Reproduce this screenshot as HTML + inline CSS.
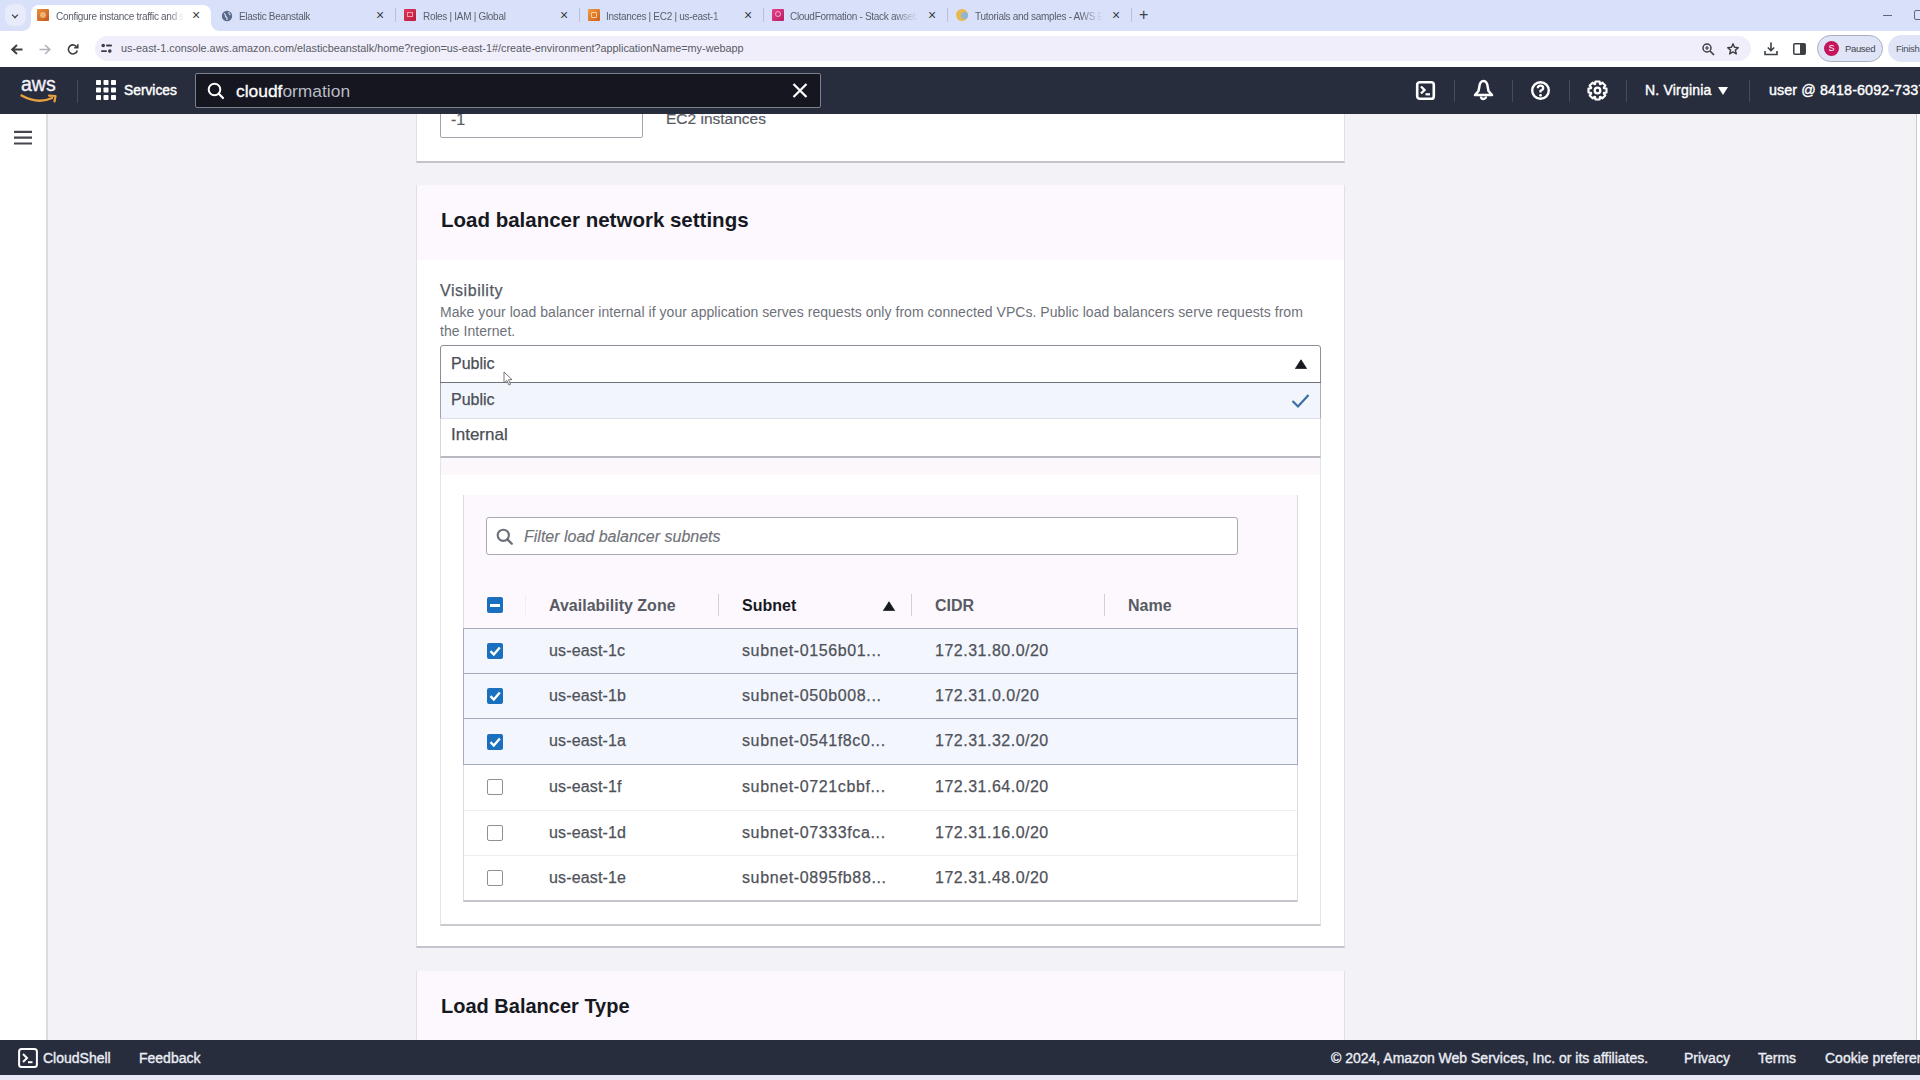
<!DOCTYPE html>
<html><head><meta charset="utf-8">
<style>
*{box-sizing:border-box;margin:0;padding:0}
html,body{width:1920px;height:1080px;overflow:hidden;background:#f3f2f7;font-family:"Liberation Sans",sans-serif;color:#16191f}
.a{position:absolute}
#tabs{z-index:10;left:0;top:0;width:1920px;height:31px;background:#d9e0fa}
#addr{z-index:10;left:0;top:31px;width:1920px;height:36px;background:#fff}
#nav{z-index:10;left:0;top:67px;width:1920px;height:47px;background:#282d3e}
#side{z-index:5;left:0;top:114px;width:48px;height:926px;background:#fff;border-right:2px solid #dcdce0}
#foot{z-index:10;left:0;top:1040px;width:1920px;height:35px;background:#282d3e}
#task{z-index:10;left:0;top:1075px;width:1920px;height:5px;background:#e6e8f6}
.tab{position:absolute;top:10px;height:14px;font-size:10px;line-height:13px;color:#5a5e69;white-space:nowrap;overflow:hidden;letter-spacing:-.3px;-webkit-mask-image:linear-gradient(to right,#000 82%,transparent)}
.tx{position:absolute;top:7px;font-size:14px;line-height:16px;color:#3c4043}
.card{position:absolute;background:#fff;box-shadow:0 1px 1px 0 rgba(0,28,36,.3),1px 1px 1px 0 rgba(0,28,36,.15),-1px 1px 1px 0 rgba(0,28,36,.15)}
.hd{top:596px;font-size:16px;font-weight:bold;color:#585b63;line-height:20px;white-space:nowrap}
.td{font-size:16px;color:#4f525a;-webkit-text-stroke:.25px #4f525a;line-height:20px;white-space:nowrap}
</style></head><body>
<div id="tabs" class="a">
  <div class="a" style="left:5px;top:4px;width:21px;height:22px;border-radius:8px;background:#e7ebfa"></div>
  <div class="a" style="left:11px;top:11px;width:8px;height:8px;border-right:2px solid #444;border-bottom:2px solid #444;transform:rotate(45deg) scale(.6)"></div>
  <div class="a" style="left:31px;top:5px;width:180px;height:26px;background:#fff;border-radius:8px 8px 0 0"></div><div class="a" style="left:23px;top:23px;width:8px;height:8px;background:radial-gradient(circle at 0 0,transparent 7.5px,#fff 8px)"></div><div class="a" style="left:211px;top:23px;width:8px;height:8px;background:radial-gradient(circle at 100% 0,transparent 7.5px,#fff 8px)"></div>
  <div class="a" style="left:37px;top:9px;width:12px;height:12px;background:linear-gradient(135deg,#e9913a,#c4561f);border-radius:1px"></div><div class="a" style="left:40px;top:12px;width:6px;height:6px;border-radius:50%;background:#f6c08a;opacity:.8"></div>
  <div class="tab" style="left:56px;width:128px;-webkit-mask-image:linear-gradient(to right,#000 88%,transparent)">Configure instance traffic and s</div>
  <div class="tx" style="left:192px">&#215;</div>
  <svg class="a" style="left:221px;top:10px" width="12" height="12" viewBox="0 0 12 12"><circle cx="6" cy="6" r="5.2" fill="#5b6b8c"/><path d="M3 3.5 Q5 4.5 4.5 6.5 Q6.5 7 6 10 M8 2 Q7.5 4 9.5 5" stroke="#dfe4f7" stroke-width="1.1" fill="none"/></svg>
  <div class="tab" style="left:239px;width:130px">Elastic Beanstalk</div>
  <div class="tx" style="left:376px">&#215;</div>
  <div class="a" style="left:395px;top:8px;width:1px;height:14px;background:#b8bfd8"></div>
  <div class="a" style="left:404px;top:9px;width:12px;height:12px;background:linear-gradient(135deg,#e0365a,#b81d3e);border-radius:1px"></div><div class="a" style="left:407px;top:12px;width:6px;height:5px;border:1px solid #f3a0b0"></div>
  <div class="tab" style="left:423px;width:130px">Roles | IAM | Global</div>
  <div class="tx" style="left:560px">&#215;</div>
  <div class="a" style="left:579px;top:8px;width:1px;height:14px;background:#b8bfd8"></div>
  <div class="a" style="left:588px;top:9px;width:12px;height:12px;background:linear-gradient(135deg,#f09a3a,#d0601f);border-radius:1px"></div><div class="a" style="left:591px;top:12px;width:6px;height:6px;border:1px solid #fad0a0;border-radius:1px"></div>
  <div class="tab" style="left:606px;width:130px">Instances | EC2 | us-east-1</div>
  <div class="tx" style="left:744px">&#215;</div>
  <div class="a" style="left:763px;top:8px;width:1px;height:14px;background:#b8bfd8"></div>
  <div class="a" style="left:772px;top:9px;width:12px;height:12px;background:linear-gradient(135deg,#e8408a,#b81e63);border-radius:1px"></div><div class="a" style="left:775px;top:11px;width:6px;height:6px;border:1px solid #f7b0d0;border-radius:50%"></div>
  <div class="tab" style="left:790px;width:128px">CloudFormation - Stack awseb</div>
  <div class="tx" style="left:928px">&#215;</div>
  <div class="a" style="left:947px;top:8px;width:1px;height:14px;background:#b8bfd8"></div>
  <div class="a" style="left:956px;top:9px;width:12px;height:12px;background:#e6b94a;border-radius:50%"></div><div class="a" style="left:961px;top:12px;width:7px;height:7px;background:#8fb5d8;border-radius:50%"></div>
  <div class="tab" style="left:975px;width:128px">Tutorials and samples - AWS El</div>
  <div class="tx" style="left:1112px">&#215;</div>
  <div class="a" style="left:1131px;top:8px;width:1px;height:14px;background:#b8bfd8"></div>
  <div class="tx" style="left:1139px;top:7px;font-size:16px">+</div>
  <div class="a" style="left:1883px;top:15px;width:9px;height:1.3px;background:#626678"></div><div class="a" style="left:1914px;top:10px;width:10px;height:10px;border:1.3px solid #626678;border-radius:2px"></div>
</div>
<div id="addr" class="a">
  <svg class="a" style="left:11px;top:13px" width="12" height="11" viewBox="0 0 12 11"><path d="M11.5 5.5 H1.5 M6 1 L1.2 5.5 L6 10" stroke="#3c4043" stroke-width="1.9" fill="none"/></svg>
  <svg class="a" style="left:39px;top:13px" width="12" height="11" viewBox="0 0 12 11"><path d="M0.5 5.5 H10.5 M6 1 L10.8 5.5 L6 10" stroke="#b0b3ba" stroke-width="1.6" fill="none"/></svg>
  <svg class="a" style="left:67px;top:12px" width="12" height="12" viewBox="0 0 12 12"><path d="M10 4.5 A4.5 4.5 0 1 0 10.3 7.5" stroke="#3c4043" stroke-width="1.6" fill="none"/><path d="M7.2 4.8 H10.8 V1.2" stroke="#3c4043" stroke-width="1.6" fill="none"/></svg>
  <div class="a" style="left:95px;top:5px;width:1656px;height:25px;border-radius:13px;background:#f0eefa"></div>
  <svg class="a" style="left:101px;top:12px" width="11" height="11" viewBox="0 0 11 11" fill="#3c4043"><circle cx="2.2" cy="2.5" r="1.8"/><rect x="5" y="1.6" width="6" height="1.8" rx=".9"/><rect x="0" y="7.2" width="6" height="1.8" rx=".9"/><circle cx="8.8" cy="8.1" r="1.8"/></svg>
  <div class="a" style="left:121px;top:11px;font-size:10.85px;color:#585b64;white-space:nowrap;line-height:13px">us-east-1.console.aws.amazon.com/elasticbeanstalk/home?region=us-east-1#/create-environment?applicationName=my-webapp</div>
  <svg class="a" style="left:1702px;top:12px" width="13" height="13" viewBox="0 0 13 13"><circle cx="5" cy="5" r="4" stroke="#3c4043" stroke-width="1.5" fill="none"/><path d="M8 8 L12 12" stroke="#3c4043" stroke-width="1.7"/><path d="M5 3 V7 M3 5 H7" stroke="#3c4043" stroke-width="1.2"/></svg>
  <svg class="a" style="left:1727px;top:12px" width="12" height="12" viewBox="0 0 12 12"><path d="M6 0.8 L7.5 4.3 L11.3 4.6 L8.4 7.1 L9.3 10.9 L6 8.9 L2.7 10.9 L3.6 7.1 L0.7 4.6 L4.5 4.3 Z" stroke="#3c4043" stroke-width="1.4" fill="none" stroke-linejoin="round"/></svg>
  <svg class="a" style="left:1764px;top:11px" width="14" height="14" viewBox="0 0 14 14"><path d="M7 0.5 V8.5 M3.8 5.5 L7 8.7 L10.2 5.5" stroke="#3c4043" stroke-width="1.6" fill="none"/><path d="M1 9 V12.5 H13 V9" stroke="#3c4043" stroke-width="1.6" fill="none"/></svg>
  <svg class="a" style="left:1793px;top:12px" width="13" height="12" viewBox="0 0 13 12"><rect x="0.8" y="0.8" width="11.4" height="10.4" rx="1" stroke="#3c4043" stroke-width="1.5" fill="none"/><rect x="7" y="1" width="5" height="10" fill="#3c4043"/></svg>
  <div class="a" style="left:1817px;top:4px;width:66px;height:27px;border-radius:14px;background:#dfe4f7;border:1px solid #a9adbf"></div>
  <div class="a" style="left:1824px;top:10px;width:15px;height:15px;border-radius:50%;background:#c4145c;color:#fff;font-size:9px;text-align:center;line-height:15px">S</div>
  <div class="a" style="left:1845px;top:12px;font-size:9.5px;color:#40444e;line-height:11px;letter-spacing:-.35px">Paused</div>
  <div class="a" style="left:1888px;top:4px;width:50px;height:27px;border-radius:14px;background:#dfe4f7"></div>
  <div class="a" style="left:1896px;top:12px;font-size:9.5px;color:#4a4e5a;line-height:11px;letter-spacing:-.3px">Finish</div>
</div>
<div id="nav" class="a">
  <div class="a" style="left:21px;top:7px;font-size:19.5px;color:#f4f2fb;line-height:20px;-webkit-text-stroke:.35px #f4f2fb">aws</div>
  <svg class="a" style="left:19px;top:25px" width="40" height="12" viewBox="0 0 40 12"><path d="M2.5 3.5 Q19 12.5 33 6" stroke="#e8a040" stroke-width="2.4" fill="none" stroke-linecap="round"/><path d="M30 3.6 L36.5 4 L35.5 9.5" stroke="#e8a040" stroke-width="2.2" fill="none" stroke-linecap="round" stroke-linejoin="round"/></svg>
  <div class="a" style="left:77px;top:13px;width:1px;height:23px;background:#414d5c"></div>
  <svg class="a" style="left:96px;top:13px" width="20" height="20" viewBox="0 0 20 20" fill="#fff"><rect x="0" y="0" width="5" height="5" rx=".8"/><rect x="7.5" y="0" width="5" height="5" rx=".8"/><rect x="15" y="0" width="5" height="5" rx=".8"/><rect x="0" y="7.5" width="5" height="5" rx=".8"/><rect x="7.5" y="7.5" width="5" height="5" rx=".8"/><rect x="15" y="7.5" width="5" height="5" rx=".8"/><rect x="0" y="15" width="5" height="5" rx=".8"/><rect x="7.5" y="15" width="5" height="5" rx=".8"/><rect x="15" y="15" width="5" height="5" rx=".8"/></svg>
  <div class="a" style="left:124px;top:15px;font-size:13.8px;line-height:18px;color:#fff;-webkit-text-stroke:.45px #fff">Services</div>
  <div class="a" style="left:195px;top:6px;width:626px;height:35px;background:#15161f;border:1px solid #7a808c;border-radius:2px"></div>
  <svg class="a" style="left:207px;top:15px" width="18" height="18" viewBox="0 0 18 18"><circle cx="7.5" cy="7.5" r="5.8" stroke="#fff" stroke-width="2" fill="none"/><path d="M11.8 11.8 L16 16" stroke="#fff" stroke-width="2.2" stroke-linecap="round"/></svg>
  <div class="a" style="left:236px;top:14px;font-size:17.4px;line-height:20px;color:#fff;-webkit-text-stroke:.3px #fff">cloudf<span style="color:#b9bcc6;-webkit-text-stroke:0">ormation</span></div>
  <svg class="a" style="left:792px;top:16px" width="16" height="15" viewBox="0 0 16 15"><path d="M1.5 1 L14.5 14 M14.5 1 L1.5 14" stroke="#fff" stroke-width="2.2"/></svg>
  <svg class="a" style="left:1415px;top:13px" width="21" height="21" viewBox="0 0 21 21"><rect x="2.2" y="2.2" width="16.6" height="16.6" rx="2.6" stroke="#fff" stroke-width="2.6" fill="none"/><path d="M6 6.5 L9.5 10 L6 13.5" stroke="#fff" stroke-width="2.4" fill="none"/><path d="M10.5 14.3 H15" stroke="#fff" stroke-width="2.2"/></svg>
  <div class="a" style="left:1454px;top:13px;width:1px;height:22px;background:#414d5c"></div>
  <svg class="a" style="left:1473px;top:12px" width="21" height="22" viewBox="0 0 21 22"><path d="M10.5 2 C7.5 2 6.5 5.5 6.2 8.5 L5.5 12 L2 16 H19 L15.5 12 L14.8 8.5 C14.5 5.5 13.5 2 10.5 2 Z" stroke="#fff" stroke-width="2.5" fill="none" stroke-linejoin="round"/><path d="M8 17.5 A2.5 2.5 0 0 0 13 17.5" stroke="#fff" stroke-width="2.4" fill="none"/></svg>
  <div class="a" style="left:1512px;top:13px;width:1px;height:22px;background:#414d5c"></div>
  <svg class="a" style="left:1530px;top:13px" width="21" height="21" viewBox="0 0 21 21"><circle cx="10.5" cy="10.5" r="8.3" stroke="#fff" stroke-width="2.4" fill="none"/><path d="M7.8 8.2 Q7.8 5.6 10.5 5.6 Q13.2 5.6 13.2 8 Q13.2 9.7 10.5 10.8 L10.5 12.5" stroke="#fff" stroke-width="2.3" fill="none"/><circle cx="10.5" cy="15.3" r="1.4" fill="#fff"/></svg>
  <div class="a" style="left:1569px;top:13px;width:1px;height:22px;background:#414d5c"></div>
  <svg class="a" style="left:1587px;top:13px" width="21" height="21" viewBox="0 0 21 21"><path d="M19.48 8.49 L19.48 12.51 L16.96 12.93 L16.79 13.35 L18.27 15.43 L15.43 18.27 L13.35 16.79 L12.93 16.96 L12.51 19.48 L8.49 19.48 L8.07 16.96 L7.65 16.79 L5.57 18.27 L2.73 15.43 L4.21 13.35 L4.04 12.93 L1.52 12.51 L1.52 8.49 L4.04 8.07 L4.21 7.65 L2.73 5.57 L5.57 2.73 L7.65 4.21 L8.07 4.04 L8.49 1.52 L12.51 1.52 L12.93 4.04 L13.35 4.21 L15.43 2.73 L18.27 5.57 L16.79 7.65 L16.96 8.07 Z" stroke="#fff" stroke-width="2.2" fill="none" stroke-linejoin="round"/><circle cx="10.5" cy="10.5" r="2.8" stroke="#fff" stroke-width="2.3" fill="none"/></svg>
  <div class="a" style="left:1626px;top:13px;width:1px;height:22px;background:#414d5c"></div>
  <div class="a" style="left:1645px;top:15px;font-size:14px;line-height:17px;color:#fff;-webkit-text-stroke:.4px #fff;letter-spacing:.2px">N. Virginia</div>
  <svg class="a" style="left:1718px;top:20px" width="10" height="8" viewBox="0 0 10 8"><path d="M0 0 H10 L5 8 Z" fill="#fff"/></svg>
  <div class="a" style="left:1749px;top:13px;width:1px;height:22px;background:#414d5c"></div>
  <div class="a" style="left:1769px;top:15px;font-size:14.3px;line-height:17px;color:#fff;-webkit-text-stroke:.4px #fff;white-space:nowrap;letter-spacing:.1px">user @ 8418-6092-7337</div>
</div>
<div id="side" class="a">
  <svg class="a" style="left:14px;top:16px" width="18" height="15" viewBox="0 0 18 14"><path d="M0 1.4 H18 M0 7.2 H18 M0 13 H18" stroke="#46474e" stroke-width="2.2"/></svg>
</div>
<div id="foot" class="a">
  <svg class="a" style="left:18px;top:8px" width="20" height="20" viewBox="0 0 20 20"><rect x="1.1" y="1.1" width="17.8" height="17.8" rx="2.5" stroke="#fff" stroke-width="2" fill="none"/><path d="M5 6 L9 10 L5 14" stroke="#fff" stroke-width="2" fill="none"/><path d="M10 14.2 H14.5" stroke="#fff" stroke-width="2"/></svg>
  <div class="a" style="left:43px;top:10px;font-size:14px;line-height:17px;color:#eceef5;-webkit-text-stroke:.35px #eceef5">CloudShell</div>
  <div class="a" style="left:139px;top:10px;font-size:14px;line-height:17px;color:#eceef5;-webkit-text-stroke:.35px #eceef5">Feedback</div>
  <div class="a" style="left:1331px;top:10px;font-size:14px;line-height:17px;color:#eceef5;-webkit-text-stroke:.35px #eceef5;white-space:nowrap">&#169; 2024, Amazon Web Services, Inc. or its affiliates.</div>
  <div class="a" style="left:1684px;top:10px;font-size:14px;line-height:17px;color:#eceef5;-webkit-text-stroke:.35px #eceef5">Privacy</div>
  <div class="a" style="left:1758px;top:10px;font-size:14px;line-height:17px;color:#eceef5;-webkit-text-stroke:.35px #eceef5">Terms</div>
  <div class="a" style="left:1825px;top:10px;font-size:14px;line-height:17px;color:#eceef5;-webkit-text-stroke:.35px #eceef5;white-space:nowrap">Cookie preferences</div>
</div>
<div id="task" class="a"></div>
<div id="main" class="a" style="left:47px;top:114px;width:1869px;height:926px;background:#f3f2f7;overflow:hidden">
</div>
<div class="a" style="left:1916px;top:114px;width:1px;height:926px;background:#c9c9d0"></div>
<div class="a" style="left:1917px;top:114px;width:3px;height:926px;background:#fff"></div>
<!-- card1 -->
<div class="a" style="left:416px;top:60px;width:929px;height:103px;background:#fff;border-left:1px solid #e0e0e6;border-right:1px solid #e0e0e6;border-bottom:2px solid #c4c4cc"></div>
<div class="a" style="left:440px;top:90px;width:203px;height:48px;border:1px solid #a3a5ad;border-radius:2px;background:#fff"></div>
<div class="a" style="left:451px;top:110px;font-size:16px;color:#5a5d66;line-height:20px;-webkit-text-stroke:.2px #5a5d66">-1</div>
<div class="a" style="left:666px;top:108.5px;font-size:15.5px;color:#595c64;-webkit-text-stroke:.2px #595c64;line-height:20px">EC2 instances</div>
<!-- card2 -->
<div class="a" style="left:416px;top:185px;width:929px;height:763px;background:#fff;border-left:1px solid #e0e0e6;border-right:1px solid #e0e0e6;border-bottom:2px solid #c4c4cc"></div>
<div class="a" style="left:417px;top:185px;width:927px;height:75px;background:#fcf8fd"></div>
<div class="a" style="left:441px;top:208px;font-size:20.5px;font-weight:bold;color:#16191f;line-height:24px;white-space:nowrap">Load balancer network settings</div>
<div class="a" style="left:440px;top:281px;font-size:16px;color:#545862;-webkit-text-stroke:.25px #545862;line-height:20px;letter-spacing:.55px">Visibility</div>
<div class="a" style="left:440px;top:303.3px;width:880px;font-size:14px;color:#6e7179;line-height:19px;letter-spacing:.045px">Make your load balancer internal if your application serves requests only from connected VPCs. Public load balancers serve requests from the Internet.</div>
<!-- subnet container -->
<div class="a" style="left:440px;top:440px;width:881px;height:486px;background:#fff;border-left:1px solid #e3e3ea;border-right:1px solid #e3e3ea;border-bottom:2px solid #c9c9d0"></div>
<div class="a" style="left:441px;top:440px;width:879px;height:35px;background:#fbf7fb"></div>
<div class="a" style="left:463px;top:495px;width:835px;height:407px;background:#fff;border-left:1px solid #dcdce3;border-right:1px solid #dcdce3;border-bottom:2px solid #c4c4cc"></div>
<div class="a" style="left:464px;top:495px;width:833px;height:133px;background:#fcf8fd"></div>
<div class="a" style="left:486px;top:517px;width:752px;height:38px;background:#fff;border:1px solid #a9a9b1;border-radius:3px"></div>
<svg class="a" style="left:496px;top:528px" width="18" height="18" viewBox="0 0 18 18"><circle cx="7.3" cy="7.3" r="5.6" stroke="#6b6f78" stroke-width="2.1" fill="none"/><path d="M11.4 11.4 L15.8 15.8" stroke="#6b6f78" stroke-width="2.3" stroke-linecap="round"/></svg>
<div class="a" style="left:524px;top:526.5px;font-size:16px;font-style:italic;color:#707379;-webkit-text-stroke:.15px #707379;line-height:20px">Filter load balancer subnets</div>
<!-- header row -->
<div class="a" style="left:487px;top:597px;width:16px;height:16px;background:#1a6fbf;border-radius:2px"></div>
<div class="a" style="left:490px;top:603.5px;width:10px;height:3px;background:#fff"></div>
<div class="a" style="left:525px;top:595px;width:1px;height:21px;background:#efeef3"></div>
<div class="a" style="left:718px;top:594px;width:1px;height:22px;background:#d2d0d6"></div>
<div class="a" style="left:911px;top:594px;width:1px;height:22px;background:#d2d0d6"></div>
<div class="a" style="left:1104px;top:594px;width:1px;height:22px;background:#d2d0d6"></div>
<div class="a hd" style="left:549px">Availability Zone</div>
<div class="a hd" style="left:742px;color:#16191f">Subnet</div>
<svg class="a" style="left:883px;top:600.5px" width="12" height="10" viewBox="0 0 12 10"><path d="M6 0.8 L11.6 9.6 H0.4 Z" fill="#16191f" stroke="#16191f" stroke-width=".8" stroke-linejoin="round"/></svg>
<div class="a hd" style="left:935px">CIDR</div>
<div class="a hd" style="left:1128px">Name</div>
<div class="a" style="left:463px;top:628px;width:835px;height:45.5px;background:#f3f6fd;border:1px solid #a3abbd"></div>
<svg class="a" style="left:487px;top:642.5px" width="16" height="16" viewBox="0 0 16 16"><rect width="16" height="16" rx="2" fill="#1a6fbf"/><path d="M3.5 8.2 L6.8 11.5 L12.8 4.5" stroke="#fff" stroke-width="2.4" fill="none"/></svg>
<div class="a td" style="left:549px;top:641.2px;letter-spacing:.15px">us-east-1c</div>
<div class="a td" style="left:742px;top:641.2px;letter-spacing:.62px">subnet-0156b01...</div>
<div class="a td" style="left:935px;top:641.2px;letter-spacing:.5px">172.31.80.0/20</div>
<div class="a" style="left:463px;top:672.5px;width:835px;height:46.5px;background:#f3f6fd;border:1px solid #a3abbd"></div>
<svg class="a" style="left:487px;top:688.0px" width="16" height="16" viewBox="0 0 16 16"><rect width="16" height="16" rx="2" fill="#1a6fbf"/><path d="M3.5 8.2 L6.8 11.5 L12.8 4.5" stroke="#fff" stroke-width="2.4" fill="none"/></svg>
<div class="a td" style="left:549px;top:685.7px;letter-spacing:.15px">us-east-1b</div>
<div class="a td" style="left:742px;top:685.7px;letter-spacing:.62px">subnet-050b008...</div>
<div class="a td" style="left:935px;top:685.7px;letter-spacing:.5px">172.31.0.0/20</div>
<div class="a" style="left:463px;top:718px;width:835px;height:46.5px;background:#f3f6fd;border:1px solid #a3abbd"></div>
<svg class="a" style="left:487px;top:733.5px" width="16" height="16" viewBox="0 0 16 16"><rect width="16" height="16" rx="2" fill="#1a6fbf"/><path d="M3.5 8.2 L6.8 11.5 L12.8 4.5" stroke="#fff" stroke-width="2.4" fill="none"/></svg>
<div class="a td" style="left:549px;top:731.2px;letter-spacing:.15px">us-east-1a</div>
<div class="a td" style="left:742px;top:731.2px;letter-spacing:.62px">subnet-0541f8c0...</div>
<div class="a td" style="left:935px;top:731.2px;letter-spacing:.5px">172.31.32.0/20</div>
<div class="a" style="left:487px;top:779.0px;width:16px;height:16px;border:1.5px solid #8f9097;border-radius:2px;background:#fff"></div>
<div class="a td" style="left:549px;top:776.7px;letter-spacing:.15px">us-east-1f</div>
<div class="a td" style="left:742px;top:776.7px;letter-spacing:.62px">subnet-0721cbbf...</div>
<div class="a td" style="left:935px;top:776.7px;letter-spacing:.5px">172.31.64.0/20</div>
<div class="a" style="left:464px;top:809.5px;width:833px;height:1px;background:#eeedf2"></div>
<div class="a" style="left:487px;top:824.5px;width:16px;height:16px;border:1.5px solid #8f9097;border-radius:2px;background:#fff"></div>
<div class="a td" style="left:549px;top:822.7px;letter-spacing:.15px">us-east-1d</div>
<div class="a td" style="left:742px;top:822.7px;letter-spacing:.62px">subnet-07333fca...</div>
<div class="a td" style="left:935px;top:822.7px;letter-spacing:.5px">172.31.16.0/20</div>
<div class="a" style="left:464px;top:855px;width:833px;height:1px;background:#eeedf2"></div>
<div class="a" style="left:487px;top:870.0px;width:16px;height:16px;border:1.5px solid #8f9097;border-radius:2px;background:#fff"></div>
<div class="a td" style="left:549px;top:868.2px;letter-spacing:.15px">us-east-1e</div>
<div class="a td" style="left:742px;top:868.2px;letter-spacing:.62px">subnet-0895fb88...</div>
<div class="a td" style="left:935px;top:868.2px;letter-spacing:.5px">172.31.48.0/20</div>
<!-- card3 -->
<div class="a" style="left:416px;top:971px;width:929px;height:80px;background:#fcf8fd;border-left:1px solid #e0e0e6;border-right:1px solid #e0e0e6"></div>
<div class="a" style="left:441px;top:994px;font-size:20px;font-weight:bold;color:#16191f;line-height:24px;white-space:nowrap">Load Balancer Type</div>
<!-- select + dropdown -->
<div class="a" style="left:440px;top:345px;width:881px;height:38px;background:#fff;border:1px solid #8c8f97;border-radius:3px 3px 0 0"></div>
<div class="a" style="left:451px;top:354px;font-size:16px;color:#4a4e57;-webkit-text-stroke:.25px #4a4e57;line-height:20px">Public</div>
<svg class="a" style="left:1295px;top:358.5px" width="12" height="10" viewBox="0 0 12 10"><path d="M6 0.8 L11.6 9.6 H0.4 Z" fill="#16191f" stroke="#16191f" stroke-width=".8" stroke-linejoin="round"/></svg>
<div class="a" style="left:440px;top:382px;width:881px;height:76px;background:#fff;border:1px solid #d5d5dc;border-top:none;border-bottom:2px solid #b8b8c0"></div>
<div class="a" style="left:440px;top:382px;width:881px;height:37px;background:#f2f5fc;border-left:1px solid #9aa3b3;border-right:1px solid #a9aebb;border-bottom:1px solid #dcdfe8"></div>
<div class="a" style="left:440px;top:382px;width:881px;height:1px;background:#6f747c"></div>
<div class="a" style="left:451px;top:390px;font-size:16px;color:#4a4e57;-webkit-text-stroke:.25px #4a4e57;line-height:20px">Public</div>
<svg class="a" style="left:1291px;top:393px" width="19" height="16" viewBox="0 0 19 16"><path d="M1.5 8 L7 13.5 L17.5 2" stroke="#3a6ea6" stroke-width="2.2" fill="none"/></svg>
<div class="a" style="left:451px;top:425px;font-size:17px;color:#4a4e57;-webkit-text-stroke:.25px #4a4e57;line-height:20px">Internal</div>
<!-- cursor -->
<svg class="a" style="left:503px;top:371px" width="10" height="15" viewBox="0 0 10 15"><path d="M1 1 L1 12 L3.8 9.5 L6 14 L7.6 13.2 L5.5 8.8 L9 8.6 Z" fill="#fff" stroke="#666" stroke-width=".9"/></svg>

</body></html>
